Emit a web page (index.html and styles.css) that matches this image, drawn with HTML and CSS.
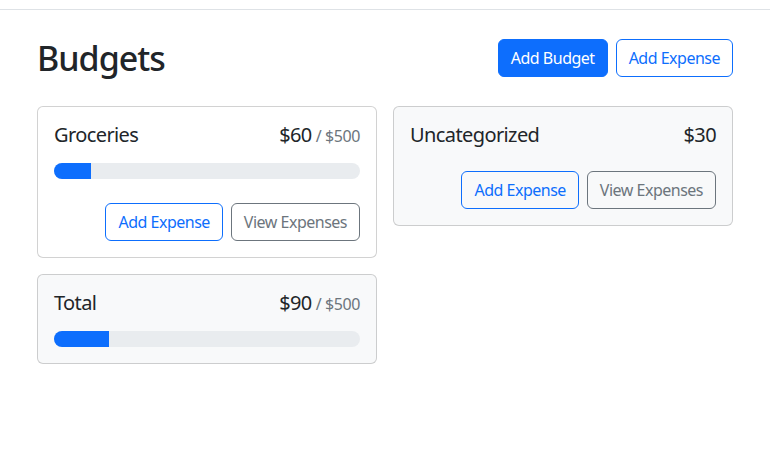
FILE: index.html
```html
<!DOCTYPE html>
<html lang="en">
<head>
<meta charset="utf-8">
<title>Budgets</title>
<link rel="stylesheet" href="styles.css">
</head>
<body>
<div class="topbar"></div>
<main class="container">
  <div class="page-header">
    <h1 class="page-title">Budgets</h1>
    <div class="actions">
      <button class="btn btn-primary">Add Budget</button>
      <button class="btn btn-outline-primary">Add Expense</button>
    </div>
  </div>
  <div class="grid">
    <div class="card">
      <div class="card-title">
        <span>Groceries</span>
        <span class="amount">$60<span class="max">/ $500</span></span>
      </div>
      <div class="progress"><div class="progress-bar" style="width:12%"></div></div>
      <div class="card-actions">
        <button class="btn btn-outline-primary">Add Expense</button>
        <button class="btn btn-outline-secondary">View Expenses</button>
      </div>
    </div>
    <div class="card card-light">
      <div class="card-title">
        <span>Uncategorized</span>
        <span class="amount">$30</span>
      </div>
      <div class="card-actions">
        <button class="btn btn-outline-primary">Add Expense</button>
        <button class="btn btn-outline-secondary">View Expenses</button>
      </div>
    </div>
    <div class="card card-light">
      <div class="card-title">
        <span>Total</span>
        <span class="amount">$90<span class="max">/ $500</span></span>
      </div>
      <div class="progress"><div class="progress-bar" style="width:18%"></div></div>
    </div>
  </div>
</main>
</body>
</html>
```
FILE: styles.css
```css
* { box-sizing: border-box; }
html, body { margin: 0; padding: 0; }
body {
  font-family: "Noto Sans", "Open Sans", sans-serif;
  font-size: 16px;
  line-height: 1.5;
  color: #212529;
  background: #fff;
}
.topbar {
  height: 10px;
  border-bottom: 1px solid #dee2e6;
}
.container {
  width: 696px;
  margin: 0 auto;
  padding-top: 29px;
}
.page-header {
  display: flex;
  align-items: center;
  justify-content: space-between;
  height: 38px;
  margin-bottom: 29px;
}
.page-title {
  margin: 0;
  font-size: 34px;
  font-weight: 500;
  line-height: 1.2;
  letter-spacing: -1px;
}
.actions { display: flex; gap: 8px; }
.btn {
  font-family: inherit;
  font-size: 16px;
  line-height: 24px;
  padding: 6px 12px;
  border-radius: 6px;
  border: 1px solid transparent;
  background: transparent;
  cursor: pointer;
  letter-spacing: -0.5px;
}
.btn-primary { background: #0d6efd; border-color: #0d6efd; color: #fff; }
.btn-outline-primary { border-color: #0d6efd; color: #0d6efd; background: #fff; }
.btn-outline-secondary { border-color: #6c757d; color: #6c757d; background: #fff; }
.card-light .btn { background: transparent; }
.grid {
  display: grid;
  grid-template-columns: 1fr 1fr;
  gap: 16px;
  align-items: start;
}
.card {
  border: 1px solid rgba(0,0,0,0.175);
  border-radius: 6px;
  padding: 16px;
  background: #fff;
}
.card-light { background: #f8f9fa; }
.card-title {
  display: flex;
  justify-content: space-between;
  align-items: baseline;
  height: 24px;
  font-size: 20px;
  line-height: 24px;
  letter-spacing: -0.6px;
}
.max {
  font-size: 16px;
  line-height: 16px;
  color: #6c757d;
  margin-left: 4px;
  letter-spacing: -0.4px;
}
.progress {
  margin-top: 16px;
  height: 16px;
  border-radius: 8px;
  background: #e9ecef;
  overflow: hidden;
}
.progress-bar { height: 100%; background: #0d6efd; }
.card-actions {
  display: flex;
  justify-content: flex-end;
  gap: 8px;
  margin-top: 24px;
}
```
